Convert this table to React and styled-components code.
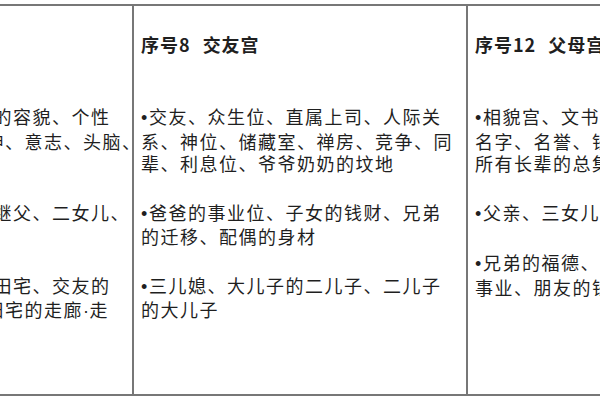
import React from "react";
import styled, { createGlobalStyle } from "styled-components";

const Global = createGlobalStyle`
  html, body {
    margin: 0;
    padding: 0;
    overflow: hidden;
    background: #ffffff;
  }
  body {
    font-family: "Noto Sans CJK SC", "Noto Sans", sans-serif;
    color: #1f1f1f;
  }
`;

const Table = styled.div`
  display: flex;
  box-sizing: border-box;
  width: 1002px;
  height: 392px;
  margin: 4px 0 0 -202px;
  border-top: 2px solid #777777;
  border-bottom: 2px solid #777777;
`;

const Column = styled.div`
  flex: 0 0 334px;
  box-sizing: border-box;
  border-left: 2px solid #777777;
  padding: 27px 9px 0 ${(p) => p.$padLeft ?? 7}px;
  overflow: hidden;
`;

const Header = styled.div`
  font-size: 18px;
  font-weight: 700;
  line-height: 22px;
  letter-spacing: 1px;
  white-space: nowrap;
  margin-bottom: 50px;
`;

const Gap = styled.span`
  display: inline-block;
  width: 12px;
`;

const Item = styled.p`
  margin: 0 0 26px;
  font-size: 18px;
  line-height: 22.5px;
  letter-spacing: 1.5px;
`;

const Bullet = styled.span`
  display: inline-block;
  width: 8px;
  letter-spacing: 0;
  font-family: "Liberation Sans", Arial, sans-serif;
  font-size: 18px;
`;

const Dot = styled.span`
  font-family: "Liberation Sans", Arial, sans-serif;
  letter-spacing: 0.5px;
`;

const Line = styled.span`
  display: block;
  white-space: nowrap;
`;

const columns = [
  {
    no: "4",
    name: "子女宫",
    lines: true,
    items: [
      [["子女宫代表了子女们的容貌、个性"], ["与才华、子女们的精神、意志、头脑、"], ["脾气、健康"]],
      [["晚辈、学生、徒弟、继父、二女儿、"], ["大儿子的三儿子"]],
      [["父母的父母、配偶的田宅、交友的"], ["外出的交通、阴宅与阳宅的走廊", "走"], ["道、厕所"]],
    ],
  },
  {
    no: "8",
    name: "交友宫",
    items: [
      "交友、众生位、直属上司、人际关系、神位、储藏室、禅房、竞争、同辈、利息位、爷爷奶奶的坟地",
      "爸爸的事业位、子女的钱财、兄弟的迁移、配偶的身材",
      "三儿媳、大儿子的二儿子、二儿子的大儿子",
    ],
  },
  {
    no: "12",
    name: "父母宫",
    items: [
      "相貌宫、文书宫、学历、毕业证、名字、名誉、钱财、遗产、老上司、所有长辈的总集合",
      "父亲、三女儿、四儿子的大儿子",
      "兄弟的福德、交友的官禄、子女的事业、朋友的钱财",
    ],
  },
];

export default function App() {
  return (
    <>
      <Global />
      <Table>
        {columns.map((col) => (
          <Column key={col.no} $padLeft={col.lines ? 10 : 7}>
            <Header>
              序号{col.no}
              <Gap />
              {col.name}
            </Header>
            {col.items.map((item, i) =>
              col.lines ? (
                <Item key={i}>
                  {item.map((parts, j) => (
                    <Line key={j}>
                      {j === 0 && <Bullet>•</Bullet>}
                      {parts[0]}
                      {parts.length > 1 && (
                        <>
                          <Dot>·</Dot>
                          {parts[1]}
                        </>
                      )}
                    </Line>
                  ))}
                </Item>
              ) : (
                <Item key={i}>
                  <Bullet>•</Bullet>
                  {item}
                </Item>
              )
            )}
          </Column>
        ))}
      </Table>
    </>
  );
}
